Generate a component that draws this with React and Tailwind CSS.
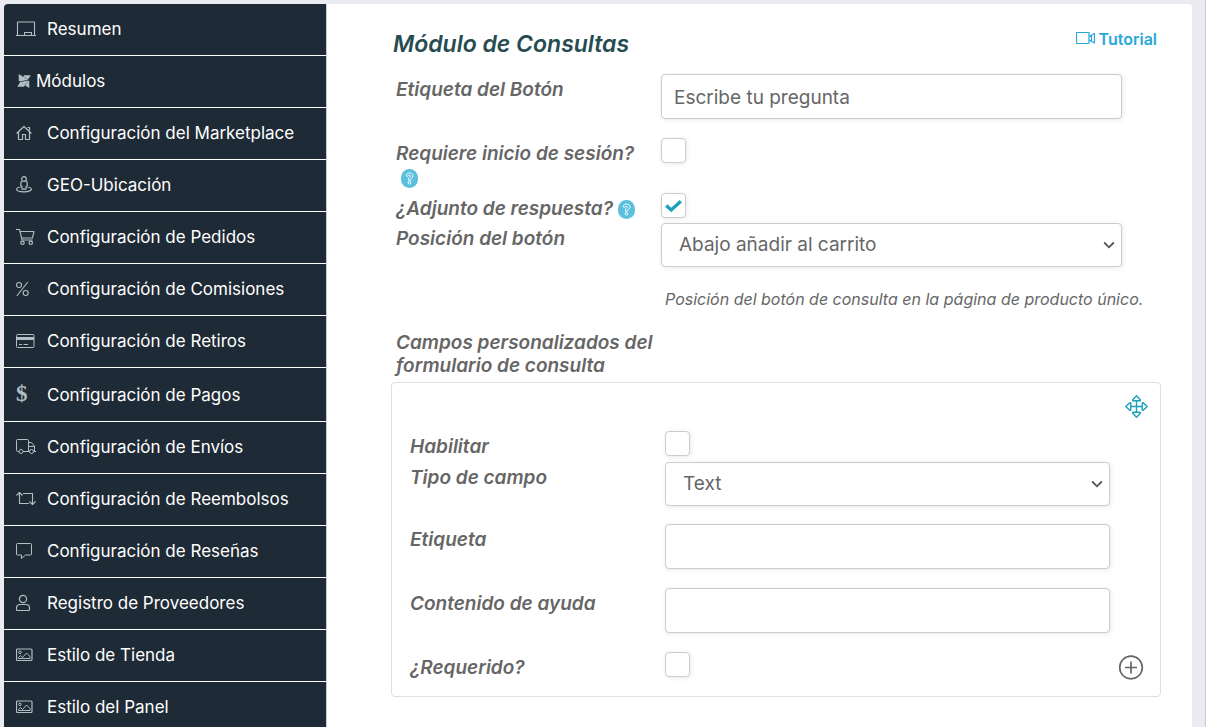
import React, { useId, useState } from 'react';
import { FaModx } from 'react-icons/fa';

function Line({ w, h, children, className = '' }) {
  return (
    <svg
      width={w}
      height={h}
      viewBox={`0 0 ${w} ${h}`}
      fill="none"
      stroke="currentColor"
      strokeWidth="1"
      strokeLinejoin="round"
      className={`shrink-0 ${className}`}
      aria-hidden="true"
    >
      {children}
    </svg>
  );
}

const Laptop = () => (
  <Line w={20} h={16}>
    <path strokeWidth="1.100" d="M1.500 14.500V1.500a.5.5 0 0 1 .5-.5h16a.5.5 0 0 1 .5.5v13M0 14.500h20M8.500 14.500v-3h7v3" />
  </Line>
);
const Home = () => (
  <Line w={16} h={16}>
    <path strokeWidth="1.2" d="M.5 8.500 8 1.500l7.500 7M2.500 7v7.500h4v-5h3v5h4V7M11.500 2.500h2v3" />
  </Line>
);
const StreetView = () => (
  <Line w={16} h={17}>
    <g strokeWidth="1.200">
      <circle cx="8" cy="3" r="2.300" />
      <path d="M6.300 5C5.200 5.500 4.800 6.200 4.800 7v2.500l1.200.9v2.700h4v-2.700l1.200-.9V7c0-.8-.4-1.500-1.500-2" />
      <path d="M4.800 11C2.300 11.300.6 12 .6 13.100c0 1.600 3.200 2.800 7.400 2.800s7.400-1.200 7.400-2.800c0-1.100-1.700-1.800-4.200-2.100" />
    </g>
  </Line>
);
const Cart = () => (
  <Line w={19} h={18}>
    <path strokeWidth="1.100" d="M0 1.500h3.500l2.600 10.500h10.500M4.200 3.500h13.800l-1.600 6.500H5.700" />
    <circle cx="6.500" cy="14.800" r="1.700" strokeWidth="1.200" />
    <circle cx="14.800" cy="14.800" r="1.700" strokeWidth="1.200" />
  </Line>
);
const Percent = () => (
  <Line w={13} h={16}>
    <g strokeWidth="1.100">
      <circle cx="3" cy="4" r="2.500" />
      <circle cx="9.700" cy="12" r="2.500" />
      <path d="M11.800 1 .8 15" />
    </g>
  </Line>
);
const Card = () => (
  <Line w={19} h={16}>
    <rect x=".5" y="1.500" width="17.500" height="13" rx="1" />
    <path d="M.5 4h17.500v3H.5z" fill="currentColor" stroke="none" />
    <path d="M3 11.500h3M7.500 11.500h4.500" />
  </Line>
);
const Truck = () => (
  <Line w={20} h={17}>
    <path d="M3 13.500H1.500a1 1 0 0 1-1-1v-10a1 1 0 0 1 1-1h10a1 1 0 0 1 1 1v11M7 13.500h6.500M12.500 4.500h2.800l3.200 3.700v5.300M17.500 13.500H20M12.500 8.500h6" />
    <circle cx="5" cy="13.500" r="2" />
    <circle cx="15.500" cy="13.500" r="2" />
  </Line>
);
const Retweet = () => (
  <Line w={20} h={15}>
    <path strokeWidth="1.100" d="M.5 4.500l3-3 3 3M3.500 1.500v11h9.500M7 2.500h9.500v11M13.500 10.500l3 3 3-3" />
  </Line>
);
const Comment = () => (
  <Line w={17} h={18}>
    <path d="M1.500 1.500h13a1 1 0 0 1 1 1v9.500a1 1 0 0 1-1 1h-5l-4 3.500v-3.500h-4a1 1 0 0 1-1-1v-9.500a1 1 0 0 1 1-1z" />
  </Line>
);
const User = () => (
  <Line w={15} h={18}>
    <g strokeWidth="1.200">
      <circle cx="7" cy="5" r="3.600" />
      <path d="M4 10.500h6c2.200 0 3.500 1.500 3.500 3.500v1.500c0 .6-.4 1-1 1h-11c-.6 0-1-.4-1-1V14c0-2 1.300-3.500 3.500-3.500z" />
    </g>
  </Line>
);
const Picture = () => (
  <Line w={17} h={14}>
    <rect x=".5" y="1" width="15.500" height="11.500" rx="1" strokeWidth="1.200" />
    <circle cx="4" cy="4.300" r="1.300" />
    <path d="M2.500 10.500V9.500l2-2 2 2 4-4.500 3.500 3.500v2z" />
  </Line>
);
const Dollar = () => (
  <span
    aria-hidden="true"
    className="pb-[2px] font-['Liberation_Serif',serif] text-[23px] leading-5 font-bold"
  >
    $
  </span>
);

const MENU = [
  { label: 'Resumen', Icon: Laptop },
  { label: 'Módulos', Icon: FaModx, compact: true },
  { label: 'Configuración del Marketplace', Icon: Home },
  { label: 'GEO-Ubicación', Icon: StreetView },
  { label: 'Configuración de Pedidos', Icon: Cart },
  { label: 'Configuración de Comisiones', Icon: Percent },
  { label: 'Configuración de Retiros', Icon: Card },
  { label: 'Configuración de Pagos', Icon: Dollar, tall: true },
  { label: 'Configuración de Envíos', Icon: Truck },
  { label: 'Configuración de Reembolsos', Icon: Retweet },
  { label: 'Configuración de Reseñas', Icon: Comment },
  { label: 'Registro de Proveedores', Icon: User },
  { label: 'Estilo de Tienda', Icon: Picture },
  { label: 'Estilo del Panel', Icon: Picture },
];

function Sidebar() {
  return (
    <nav className="w-[323px] shrink-0 overflow-hidden rounded-tl border-r border-[#cccccc] bg-[#1e2a35]">
      <ul>
        {MENU.map(({ label, Icon, compact, tall }) => (
          <li key={label} className="border-b border-white">
            <a
              href="#"
              className={`flex items-center pl-3 text-[17px] text-white ${tall ? 'h-[53px] pt-[2px]' : 'h-[51px]'}`}
            >
              <span
                className={`flex shrink-0 items-center pb-[2px] text-[#b0bec5] ${compact ? 'w-5 text-base' : 'w-[31px]'}`}
              >
                <Icon />
              </span>
              {label}
            </a>
          </li>
        ))}
      </ul>
    </nav>
  );
}

function Help() {
  return (
    <button
      type="button"
      aria-label="Ayuda"
      className="inline-flex h-[19px] w-[17px] items-center justify-center rounded-full bg-[#5bc0de] align-middle text-white"
    >
      <Line w={9} h={13}>
        <path
          strokeWidth=".9"
          d="M1 3.700C1.500 1.900 2.700 1 4.500 1 6.600 1 8 2.200 8 3.900c0 2.100-2.200 2.300-2.200 3.600v.6H3.300v-.8c0-1.900 2.100-2.100 2.100-3.200 0-.5-.4-.8-1-.8-.7 0-1.100.4-1.500 1z"
        />
        <circle cx="4.500" cy="10.700" r="1.300" strokeWidth="1" />
      </Line>
    </button>
  );
}

const BOX =
  'rounded border border-[#cccccc] bg-white text-[#666666] shadow-[1px_1px_5px_0_#e9e9e9] outline-none';

function Check({ id, initial = false }) {
  const [on, setOn] = useState(initial);
  return (
    <span className="grid h-[25px] w-[25px]">
      <input
        id={id}
        type="checkbox"
        checked={on}
        onChange={(e) => setOn(e.target.checked)}
        className={`${BOX} peer col-start-1 row-start-1 h-[25px] w-[25px] appearance-none`}
      />
      <svg
        width="17"
        height="13"
        viewBox="0 0 17 13"
        fill="none"
        stroke="#1ba0bd"
        strokeWidth="3.200"
        className="pointer-events-none invisible col-start-1 row-start-1 place-self-center peer-checked:visible"
        aria-hidden="true"
      >
        <path d="M1.200 6.500l5 4.500L15.800 2.200" />
      </svg>
    </span>
  );
}

function Select({ id, options }) {
  return (
    <span className="grid">
      <select
        id={id}
        className={`${BOX} col-start-1 row-start-1 h-11 w-full appearance-none pt-px pl-[17px] text-[19px]`}
      >
        {options.map((o) => (
          <option key={o}>{o}</option>
        ))}
      </select>
      <svg
        width="12"
        height="8"
        viewBox="0 0 12 8"
        fill="none"
        stroke="#555555"
        strokeWidth="1.800"
        className="pointer-events-none col-start-1 row-start-1 mr-[7px] self-center justify-self-end"
        aria-hidden="true"
      >
        <path d="M1.200 1.500l4.800 4.800 4.800-4.800" />
      </svg>
    </span>
  );
}

function TextBox({ id, value = '' }) {
  return (
    <input id={id} type="text" defaultValue={value} className={`${BOX} block h-[45px] w-full px-3 pt-px text-[19px]`} />
  );
}

function Row({ label, help, nested, className = '', children }) {
  const id = useId();
  return (
    <div className={`flex items-start ${className}`}>
      <div
        className={`shrink-0 pt-1 text-[19px] leading-[23px] font-semibold text-[#666666] italic ${nested ? 'w-[255px]' : 'w-[270px] pl-[5px]'}`}
      >
        <label htmlFor={id}>{label}</label>
        {help === 'inline' && <span className="pl-[5px] leading-none"><Help /></span>}
        {help === 'below' && <div className="pt-px pl-[5px]"><Help /></div>}
      </div>
      <div className="min-w-0 flex-1">{children(id)}</div>
    </div>
  );
}

export default function App() {
  return (
    <div className="flex h-screen overflow-hidden bg-white font-[Inter,'Noto_Sans',sans-serif]">
      <div className="flex min-w-0 flex-1 border-r border-[#cccccc] bg-[#ebecf1] pt-1 pr-[13px] pl-1">
        <Sidebar />
        <main className="min-w-0 flex-1 rounded-tr bg-white pr-[31px] pl-16">
          <header className="flex items-start justify-between pt-[25px] pr-1">
            <h2 className="pl-[2px] text-[23px] leading-[30px] font-semibold text-[#264c52] italic">
              Módulo de Consultas
            </h2>
            <a href="#" className="flex items-center gap-[3px] text-base leading-5 font-semibold text-[#2aa8d8]">
              <Line w={20} h={14}>
                <rect x=".5" y=".5" width="12.500" height="11" rx=".5" strokeWidth="1.200" />
                <path strokeWidth="1.200" d="M13 4.500l5.500-3v9.500L13 8M15.500 3.500v5.500" />
              </Line>
              Tutorial
            </a>
          </header>

          <form className="pt-[15px]">
            <div className="pr-[39px]">
              <Row label="Etiqueta del Botón" className="mb-[19px]">
                {(id) => <TextBox id={id} value="Escribe tu pregunta" />}
              </Row>
              <Row label="Requiere inicio de sesión?" help="below" className="h-[55px]">
                {(id) => <Check id={id} />}
              </Row>
              <Row label="¿Adjunto de respuesta?" help="inline" className="h-[30px]">
                {(id) => <Check id={id} initial />}
              </Row>
              <Row label="Posición del botón" className="h-[76px]">
                {(id) => <Select id={id} options={['Abajo añadir al carrito']} />}
              </Row>
            </div>
            <p className="-mt-[10px] pl-[274px] text-base leading-5 whitespace-nowrap text-[#666666] italic">
              Posición del botón de consulta en la página de producto único.
            </p>

            <fieldset className="pt-[22px]">
              <legend className="contents">
                <span className="block w-[270px] pl-[5px] text-[19px] leading-[23px] font-semibold text-[#666666] italic">
                  Campos personalizados del formulario de consulta
                </span>
              </legend>
              <div className="mt-[5px] flex flex-col rounded border border-[#dfdfdf] pt-3 pr-3 pb-[15px] pl-[18px]">
                <button type="button" aria-label="Mover" className="mb-3 self-end text-[#1ba0bd]">
                  <svg width="24" height="24" viewBox="0 0 24 24" fill="none" stroke="currentColor" strokeWidth="1.400" strokeLinejoin="round" aria-hidden="true">
                    <path d="M12.500 6v11M7 11.500h11" />
                    <path d="M12.500.8l3.800 4q.3 1-.8 1h-6q-1.100 0-.8-1zM12.500 22.200l3.800-4q.3-1-.8-1h-6q-1.100 0-.8 1zM1.800 11.500l4-3.800q1-.3 1 .8v6q0 1.100-1 .8zM23.200 11.500l-4-3.800q-1-.3-1 .8v6q0 1.100 1 .8z" />
                  </svg>
                </button>
                <div className="pr-[38px]">
                  <Row nested label="Habilitar" className="h-[31px]">
                    {(id) => <Check id={id} />}
                  </Row>
                  <Row nested label="Tipo de campo" className="mb-[18px]">
                    {(id) => <Select id={id} options={['Text']} />}
                  </Row>
                  <Row nested label="Etiqueta" className="mb-[19px]">
                    {(id) => <TextBox id={id} />}
                  </Row>
                  <Row nested label="Contenido de ayuda" className="mb-[19px]">
                    {(id) => <TextBox id={id} />}
                  </Row>
                </div>
                <div className="flex items-start justify-between pr-1">
                  <Row nested label="¿Requerido?">{(id) => <Check id={id} />}</Row>
                  <button type="button" aria-label="Añadir campo" className="mt-[3px] text-[#666666]">
                    <svg width="26" height="26" viewBox="0 0 26 26" fill="none" stroke="currentColor" strokeWidth="1.700" className="block" aria-hidden="true">
                      <circle cx="13" cy="12.500" r="11.300" />
                      <path d="M13 6.500v12M7 12.500h12" />
                    </svg>
                  </button>
                </div>
              </div>
            </fieldset>
          </form>
        </main>
      </div>
      <div className="w-[2px] shrink-0" />
    </div>
  );
}
